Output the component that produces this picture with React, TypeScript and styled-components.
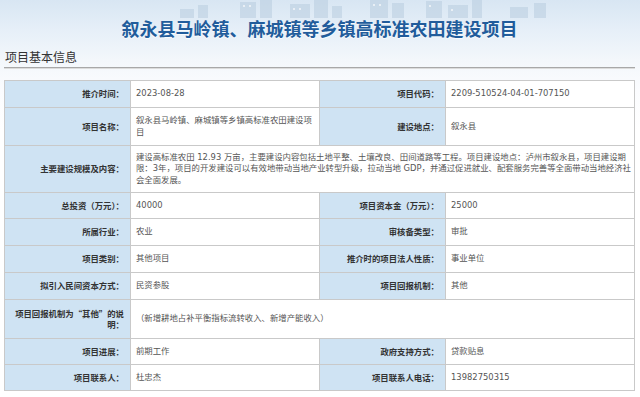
import styled, { createGlobalStyle } from "styled-components";

type Pair = [string, React.ReactNode];

const getRows = (): { h: number; cells: Pair[] }[] => [
  { h: 27, cells: [["推介时间：", "2023-08-28"], ["项目代码：", "2209-510524-04-01-707150"]] },
  {
    h: 38,
    cells: [["项目名称：", "叙永县马岭镇、麻城镇等乡镇高标准农田建设项目"], ["建设地点：", "叙永县"]],
  },
  {
    h: 47,
    cells: [
      [
        "主要建设规模及内容：",
        <>
          <Line>建设高标准农田 12.93 万亩，主要建设内容包括土地平整、土壤改良、田间道路等工程。项目建设地点：泸州市叙永县，项目建设期</Line>
          <Line>限：3年，项目的开发建设可以有效地带动当地产业转型升级，拉动当地 GDP，并通过促进就业、配套服务完善等全面带动当地经济社</Line>
          <Line>会全面发展。</Line>
        </>,
      ],
    ],
  },
  { h: 26, cells: [["总投资（万元）：", "40000"], ["项目资本金（万元）：", "25000"]] },
  { h: 27, cells: [["所属行业：", "农业"], ["审核备类型：", "审批"]] },
  { h: 27, cells: [["项目类别：", "其他项目"], ["推介时的项目法人性质：", "事业单位"]] },
  { h: 27, cells: [["拟引入民间资本方式：", "民资参股"], ["项目回报机制：", "其他"]] },
  { h: 39, cells: [["项目回报机制为“其他”的说明：", "（新增耕地占补平衡指标流转收入、新增产能收入）"]] },
  { h: 26, cells: [["项目进展：", "前期工作"], ["政府支持方式：", "贷款贴息"]] },
  { h: 26, cells: [["项目联系人：", "杜忠杰"], ["项目联系人电话：", "13982750315"]] },
];

const App = () => {
  const rows = getRows();
  return (
    <Page>
      <GlobalStyle />
      <Header>
        <Skyline width="380" height="18" viewBox="0 0 380 18">
          <g fill="#b9cde0" opacity="0.55">
            <rect x="0" y="9" width="14" height="9" />
            <rect x="18" y="5" width="10" height="13" />
            <rect x="60" y="2" width="16" height="16" />
            <rect x="80" y="0" width="12" height="18" />
            <rect x="110" y="4" width="20" height="14" />
            <rect x="134" y="0" width="14" height="18" />
            <rect x="152" y="6" width="10" height="12" />
            <rect x="190" y="0" width="18" height="18" />
            <rect x="212" y="3" width="12" height="15" />
            <rect x="246" y="1" width="16" height="17" />
            <rect x="268" y="5" width="20" height="13" />
            <rect x="292" y="0" width="10" height="18" />
            <rect x="330" y="7" width="18" height="11" />
            <rect x="354" y="3" width="12" height="15" />
          </g>
          <g fill="#ffffff" opacity="0.6">
            <rect x="63" y="5" width="2" height="2" />
            <rect x="69" y="5" width="2" height="2" />
            <rect x="113" y="8" width="2" height="2" />
            <rect x="119" y="8" width="2" height="2" />
            <rect x="193" y="4" width="2" height="2" />
            <rect x="199" y="4" width="2" height="2" />
            <rect x="249" y="5" width="2" height="2" />
            <rect x="271" y="9" width="2" height="2" />
          </g>
        </Skyline>
        <Title>叙永县马岭镇、麻城镇等乡镇高标准农田建设项目</Title>
        <SectionTitle>项目基本信息</SectionTitle>
      </Header>
      <InfoTable>
        <colgroup>
          <col width="20%" />
          <col width="30%" />
          <col width="20%" />
          <col width="30%" />
        </colgroup>
        <tbody>
          {rows.map((row, i) => (
            <Row key={i} $h={row.h}>
              {row.cells.map(([label, value], j) => (
                <Cells key={j} label={label} value={value} wide={row.cells.length === 1} />
              ))}
            </Row>
          ))}
        </tbody>
      </InfoTable>
    </Page>
  );
};

const Cells = ({ label, value, wide }: { label: string; value: React.ReactNode; wide: boolean }) => (
  <>
    <Label>{label}</Label>
    <Value colSpan={wide ? 3 : 1}>{value}</Value>
  </>
);

export default App;

const GlobalStyle = createGlobalStyle`
  * { box-sizing: border-box; }
  body {
    margin: 0;
    background: #fff;
    font-family: "Noto Sans CJK SC", sans-serif;
  }
`;

const Page = styled.div`
  width: 640px;
  height: 397px;
  padding: 0 5px 0 4px;
  overflow: hidden;
  background: linear-gradient(180deg, #d8e6f3 0px, #e6eff8 30px, #f3f7fb 60px, #fbfcfe 90px, #ffffff 130px);
`;

const Header = styled.div`
  position: relative;
  display: flex;
  flex-direction: column;
`;

const Skyline = styled.svg`
  position: absolute;
  top: 0;
  left: 176px;
`;

const Title = styled.h1`
  position: relative;
  margin: 0;
  padding-top: 17px;
  font-size: 18px;
  line-height: 22px;
  font-weight: bold;
  text-align: center;
  color: #215c9b;
  text-shadow: 0 1px 1px rgba(255, 255, 255, 0.8);
  font-family: "Noto Sans CJK SC", sans-serif;
`;

const SectionTitle = styled.div`
  margin-top: 10px;
  padding: 0 0 2px 1px;
  font-size: 12px;
  line-height: 16px;
  color: #333;
  border-bottom: 1px solid #a8a8a8;
  box-shadow: 0 1px 0 #dcdcdc;
`;

const InfoTable = styled.table`
  width: 631px;
  margin-top: 12px;
  border-collapse: collapse;
  table-layout: fixed;
  font-size: 8.4px;
  line-height: 11.2px;
`;

const Row = styled.tr<{ $h: number }>`
  height: ${(p) => p.$h}px;
`;

const Label = styled.td`
  padding: 0 6px 0 4px;
  border: 1px solid #c9c9c9;
  background: #cfe3f3;
  color: #333;
  font-weight: bold;
  text-align: right;
  vertical-align: middle;
  font-family: "Noto Sans CJK SC", sans-serif;
`;

const Value = styled.td`
  padding: 0 5px;
  border: 1px solid #c9c9c9;
  background: #fff;
  color: #555;
  text-align: left;
  vertical-align: middle;
  font-family: "DejaVu Sans", "Noto Sans CJK SC", sans-serif;
`;

const Line = styled.div`
  white-space: nowrap;
`;
